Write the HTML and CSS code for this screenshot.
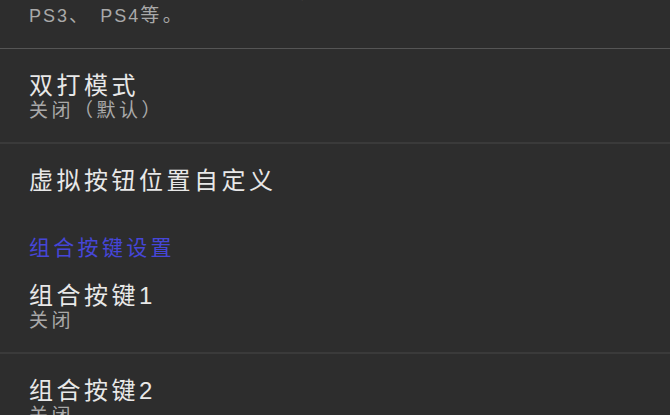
FILE: index.html
```html
<!DOCTYPE html>
<html lang="zh-CN">
<head>
  <meta charset="UTF-8">
  <title>设置</title>
  <link rel="stylesheet" href="styles.css">
</head>
<body>
  <div class="prefs">
    <div class="pref pref-cut pref-light">
      <div class="pref-summary">支持市面上大部分蓝牙手柄，例如Xbox、<br><span class="latin">PS3</span>、 <span class="latin">PS4</span>等。</div>
    </div>

    <div class="pref">
      <div class="pref-title">双打模式</div>
      <div class="pref-summary">关闭（默认）</div>
    </div>

    <div class="pref pref-plain">
      <div class="pref-title">虚拟按钮位置自定义</div>
    </div>

    <div class="pref-category">组合按键设置</div>

    <div class="pref">
      <div class="pref-title">组合按键1</div>
      <div class="pref-summary">关闭</div>
    </div>

    <div class="pref">
      <div class="pref-title">组合按键2</div>
      <div class="pref-summary">关闭</div>
    </div>
  </div>
</body>
</html>
```

FILE: styles.css
```css
/* Base Reset */
* {
  box-sizing: border-box;
  margin: 0;
  padding: 0;
}
html, body {
  height: 100%;
  overflow: hidden;
}
body {
  font-family: 'Liberation Sans', 'Noto Sans CJK SC', sans-serif;
  background-color: #2d2d2d;
  color: #e6e6e6;
}
.prefs {
  display: flex;
  flex-direction: column;
}
.pref {
  padding: 23px 29px 19px;
  border-bottom: 2px solid #3a3a3a;
}
/* first row is scrolled half out of view */
.pref-cut {
  margin-top: -20px;
  padding-top: 0;
  padding-bottom: 20px;
}
.pref-light {
  border-bottom: 1px solid #555;
}
.pref-plain {
  border-bottom: none;
  padding-bottom: 20px;
}
.pref-title {
  font-size: 24px;
  line-height: 27px;
  letter-spacing: 3.5px;
  color: #e8e8e8;
}
.pref-summary {
  font-size: 19px;
  line-height: 24px;
  letter-spacing: 3.5px;
  color: #a9a9a9;
}
.pref-summary .latin {
  font-size: 18px;
  letter-spacing: 2px;
}
.pref-category {
  padding: 22px 29px 0;
  font-size: 21px;
  line-height: 24px;
  letter-spacing: 3.3px;
  color: #4646d8;
}
.pref-category + .pref {
  padding-top: 22px;
}
```
